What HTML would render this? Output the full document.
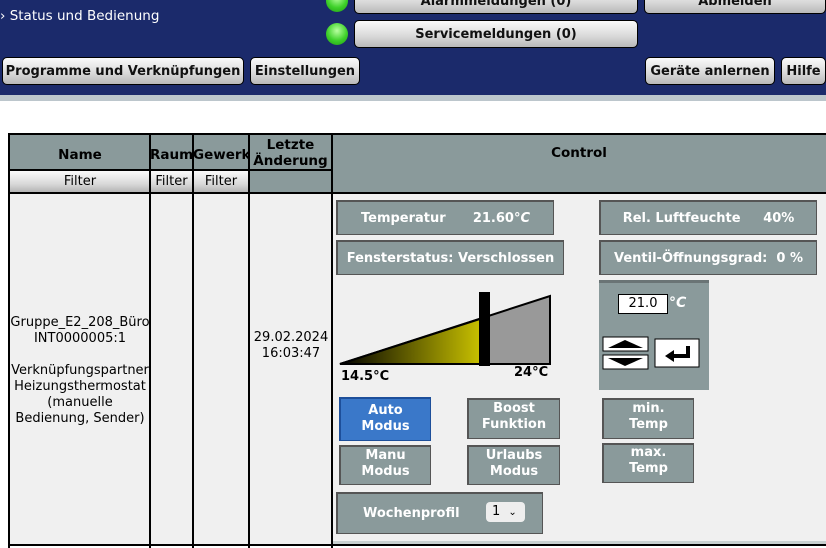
<!DOCTYPE html><html><head><meta charset="utf-8"><style>
*{box-sizing:border-box}
body{margin:0;width:826px;height:548px;overflow:hidden;background:#fff;font-family:"DejaVu Sans","Liberation Sans",sans-serif;position:relative}
.a{position:absolute}
.hdr{left:0;top:0;width:826px;height:95px;background:#1b2a6b}
.bar{left:0;top:95px;width:826px;height:6px;background:#bcc6cc}
.btn{position:absolute;background:linear-gradient(#fafafa,#d8d8d8 60%,#b8b8b8);border:1px solid #000;border-radius:5px;font-weight:bold;font-size:13px;text-align:center;color:#111}
.led{position:absolute;width:22px;height:22px;border-radius:50%;background:radial-gradient(circle at 50% 35%,#b8ffa0,#3ed12a 55%,#1f9a14)}
.g{position:absolute;background:#8a9a9b;border:2px solid #000;border-width:2px 1px 1px 2px;border-color:#555;color:#fff;font-weight:bold;font-size:13px;text-align:center}
.v{position:absolute;background:#000;width:2px}
.h{position:absolute;background:#000;height:2px}
.th{position:absolute;background:#8a9a9b;font-weight:bold;font-size:13.5px;text-align:center;color:#000}
.f{position:absolute;background:linear-gradient(#fafafa,#d8d8d8 60%,#b0b0b0);font-size:13px;text-align:center;line-height:22px}
.t{font-size:13px;text-align:center;line-height:16px;color:#000}
</style></head><body>
<div class="a hdr"></div><div class="a bar"></div>
<div class="a" style="left:0;top:8px;color:#fff;font-size:13.5px">› Status und Bedienung</div>
<div class="led" style="left:326px;top:-10px"></div>
<div class="led" style="left:326px;top:23px"></div>
<div class="btn" style="left:354px;top:-14px;width:284px;height:28px;line-height:30px">Alarmmeldungen (0)</div>
<div class="btn" style="left:354px;top:20px;width:284px;height:28px;line-height:28px">Servicemeldungen (0)</div>
<div class="btn" style="left:644px;top:-14px;width:182px;height:28px;line-height:30px">Abmelden</div>
<div class="btn" style="left:2px;top:57px;width:242px;height:28px;line-height:27px">Programme und Verknüpfungen</div>
<div class="btn" style="left:250px;top:57px;width:110px;height:28px;line-height:27px">Einstellungen</div>
<div class="btn" style="left:645px;top:57px;width:130px;height:28px;line-height:27px">Geräte anlernen</div>
<div class="btn" style="left:781px;top:57px;width:45px;height:28px;line-height:27px">Hilfe</div>

<div class="a" style="left:10px;top:193px;width:816px;height:352px;background:#f0f0f0"></div>
<div class="th" style="left:10px;top:135px;width:140px;height:35px;line-height:40px">Name</div>
<div class="th" style="left:150px;top:135px;width:43px;height:35px;line-height:40px">Raum</div>
<div class="th" style="left:193px;top:135px;width:56px;height:35px;line-height:40px">Gewerk</div>
<div class="th" style="left:249px;top:135px;width:83px;height:58px;padding-top:2px;line-height:16px">Letzte<br>Änderung</div>
<div class="th" style="left:332px;top:135px;width:494px;height:58px;line-height:36px">Control</div>
<div class="f" style="left:10px;top:171px;width:140px;height:22px">Filter</div>
<div class="f" style="left:150px;top:171px;width:43px;height:22px">Filter</div>
<div class="f" style="left:193px;top:171px;width:56px;height:22px">Filter</div>
<div class="h" style="left:8px;top:133px;width:818px"></div>
<div class="h" style="left:8px;top:169px;width:324px"></div>
<div class="h" style="left:8px;top:192px;width:818px"></div>
<div class="h" style="left:8px;top:544px;width:818px"></div>
<div class="v" style="left:8px;top:133px;height:415px"></div>
<div class="v" style="left:149px;top:133px;height:415px"></div>
<div class="v" style="left:192px;top:133px;height:415px"></div>
<div class="v" style="left:248px;top:133px;height:415px"></div>
<div class="v" style="left:331px;top:133px;height:415px"></div>
<div class="a" style="left:333px;top:541px;width:493px;height:3px;background:#c8d0d0"></div>

<div class="a t" style="left:10px;top:315px;width:140px">Gruppe_E2_208_Büro<br>INT0000005:1<br><br>Verknüpfungspartner<br>Heizungsthermostat<br>(manuelle<br>Bedienung, Sender)</div>
<div class="a t" style="left:250px;top:330px;width:82px">29.02.2024<br>16:03:47</div>

<div class="g" style="left:336px;top:200px;width:218px;height:35px;line-height:33px;word-spacing:0">Temperatur&nbsp;&nbsp;&nbsp;&nbsp;&nbsp;&nbsp;21.60°<i>C</i></div>
<div class="g" style="left:599px;top:200px;width:218px;height:35px;line-height:33px">Rel. Luftfeuchte&nbsp;&nbsp;&nbsp;&nbsp;&nbsp;40%</div>
<div class="g" style="left:336px;top:240px;width:228px;height:35px;line-height:33px">Fensterstatus: Verschlossen</div>
<div class="g" style="left:599px;top:240px;width:218px;height:35px;line-height:33px">Ventil-Öffnungsgrad:&nbsp; 0 %</div>

<svg class="a" style="left:336px;top:288px" width="220" height="82">
<defs><linearGradient id="y" x1="0" x2="1"><stop offset="0" stop-color="#000"/><stop offset="1" stop-color="#d0c800"/></linearGradient></defs>
<polygon points="4,76 214,8 214,76" fill="#999" stroke="#000" stroke-width="2"/>
<polygon points="4,76 150,29 150,76" fill="url(#y)" stroke="#000" stroke-width="2"/>
<rect x="143" y="4" width="11" height="74" fill="#000"/>
</svg>
<div class="a" style="left:341px;top:369px;font-size:13px;font-weight:bold">14.5°C</div>
<div class="a" style="left:514px;top:365px;font-size:13px;font-weight:bold">24°C</div>

<div class="a" style="left:599px;top:280px;width:110px;height:110px;background:#8a9a9b;border-top:3px solid #6a7475"></div>
<div class="a" style="left:618px;top:294px;width:50px;height:20px;background:#fff;border:1px solid #000;font-size:13px;line-height:18px;text-align:center">21.0</div>
<div class="a" style="left:669px;top:295px;color:#fff;font-size:14px;font-weight:bold">°<i>C</i></div>
<svg class="a" style="left:602px;top:336px" width="100" height="36">
<rect x="1" y="1" width="45" height="14" fill="#fff" stroke="#000"/>
<polygon points="6,12 23,4 41,12" fill="#000"/>
<rect x="1" y="19" width="45" height="14" fill="#fff" stroke="#000"/>
<polygon points="6,22 23,30 41,22" fill="#000"/>
<rect x="53" y="3" width="44" height="28" fill="#fff" stroke="#000"/>
<path d="M86 10v10H70" stroke="#000" stroke-width="4" fill="none"/><polygon points="63,20 72,14 72,26" fill="#000"/>
</svg>

<div class="g" style="left:339px;top:397px;width:92px;height:44px;background:#3a78c9;border-color:#1d4f9a;line-height:16px;padding-top:4px;font-size:13px">Auto<br>Modus</div>
<div class="g" style="left:467px;top:398px;width:93px;height:41px;line-height:16px;padding-top:1px">Boost<br>Funktion</div>
<div class="g" style="left:602px;top:398px;width:92px;height:41px;line-height:16px;padding-top:1px">min.<br>Temp</div>
<div class="g" style="left:339px;top:445px;width:92px;height:40px;line-height:16px;padding-top:1px">Manu<br>Modus</div>
<div class="g" style="left:467px;top:445px;width:93px;height:40px;line-height:16px;padding-top:1px">Urlaubs<br>Modus</div>
<div class="g" style="left:602px;top:443px;width:92px;height:40px;line-height:16px;padding-top:0">max.<br>Temp</div>
<div class="g" style="left:336px;top:492px;width:207px;height:42px;line-height:40px;text-align:left;padding-left:25px">Wochenprofil</div>
<div class="a" style="left:486px;top:502px;width:39px;height:20px;background:#eee;border-radius:4px;font-size:13px;line-height:20px;padding-left:6px">1 <span style="font-size:10px;margin-left:4px">⌄</span></div>
</body></html>
